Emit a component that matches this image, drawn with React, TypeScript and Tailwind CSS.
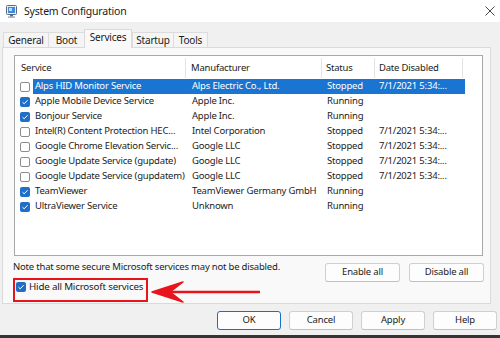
import React from "react";

type Row = { name: string; maker: string; status: string; date: string; checked: boolean; sel?: boolean };

const rows: Row[] = [
  { name: "Alps HID Monitor Service", maker: "Alps Electric Co., Ltd.", status: "Stopped", date: "7/1/2021 5:34:...", checked: false, sel: true },
  { name: "Apple Mobile Device Service", maker: "Apple Inc.", status: "Running", date: "", checked: true },
  { name: "Bonjour Service", maker: "Apple Inc.", status: "Running", date: "", checked: true },
  { name: "Intel(R) Content Protection HEC...", maker: "Intel Corporation", status: "Stopped", date: "7/1/2021 5:34:...", checked: false },
  { name: "Google Chrome Elevation Servic...", maker: "Google LLC", status: "Stopped", date: "7/1/2021 5:34:...", checked: false },
  { name: "Google Update Service (gupdate)", maker: "Google LLC", status: "Stopped", date: "7/1/2021 5:34:...", checked: false },
  { name: "Google Update Service (gupdatem)", maker: "Google LLC", status: "Stopped", date: "7/1/2021 5:34:...", checked: false },
  { name: "TeamViewer", maker: "TeamViewer Germany GmbH", status: "Running", date: "", checked: true },
  { name: "UltraViewer Service", maker: "Unknown", status: "Running", date: "", checked: true },
];

function Check({ on }: { on: boolean }) {
  if (on)
    return (
      <span className="w-[10px] h-[10px] rounded-[2px] bg-[#1f6fc9] flex items-center justify-center shrink-0">
        <svg width="8" height="8" viewBox="0 0 8 8">
          <path d="M1.5 4.2 L3.2 5.8 L6.6 2.2" fill="none" stroke="#fff" strokeWidth="1" />
        </svg>
      </span>
    );
  return <span className="w-[10px] h-[10px] rounded-[2px] border border-[#8c8c8c] bg-white shrink-0" />;
}

function Btn({ label, w, primary }: { label: string; w: string; primary?: boolean }) {
  return (
    <div
      className={`${w} h-[19px] rounded-[3px] border ${
        primary ? "border-[#1a6fc4]" : "border-[#d0d0d0] border-b-[#c0c0c0]"
      } bg-[#fdfdfd] flex items-center justify-center text-[9.5px] tracking-[-0.2px] text-[#1b1b1b]`}
    >
      {label}
    </div>
  );
}

function Tab({ label, w, sel }: { label: string; w: string; sel?: boolean }) {
  if (sel)
    return (
      <div className={`${w} h-[19px] -mb-px z-10 bg-[#f9f9f9] border-t border-l border-r border-[#dadada] flex items-center justify-center pb-[3px] text-[10px] tracking-[-0.2px] text-[#1b1b1b]`}>
        {label}
      </div>
    );
  return (
    <div className={`${w} h-[15px] bg-[#f5f5f5] border-t border-l border-[#dcdcdc] flex items-center justify-center text-[10px] tracking-[-0.2px] text-[#1b1b1b]`}>
      {label}
    </div>
  );
}

export default function App() {
  return (
    <div className="w-[500px] h-[338px] bg-[#f0f0f0] flex flex-col overflow-hidden font-['Noto_Sans',sans-serif] text-[#1b1b1b]">
      {/* Title bar */}
      <div className="h-[22px] bg-white flex items-center pl-[6px] shrink-0">
        <svg width="11" height="13" viewBox="0 0 11 13">
          <rect x="0.5" y="0.5" width="10" height="9" rx="1" fill="#e8eef5" stroke="#5a6b80" />
          <rect x="2" y="2" width="7" height="6" fill="#3d8be0" />
          <rect x="3" y="3" width="3" height="3" fill="#bfe0ff" />
          <rect x="4" y="10" width="3" height="1.5" fill="#5a6b80" />
          <rect x="2" y="11.5" width="7" height="1.2" fill="#8a97a8" />
        </svg>
        <span className="ml-[7px] text-[10.5px] tracking-[-0.2px] leading-none text-[#1a1a1a]">System Configuration</span>
        <svg className="ml-auto mr-[5px]" width="10" height="10" viewBox="0 0 10 10">
          <path d="M0.5 0.5 L9.5 9.5 M9.5 0.5 L0.5 9.5" stroke="#333" strokeWidth="0.9" />
        </svg>
      </div>

      {/* Tabs */}
      <div className="mt-[7px] pl-[3px] flex items-end h-[18px] shrink-0">
        <Tab label="General" w="w-[45px]" />
        <Tab label="Boot" w="w-[36px]" />
        <Tab label="Services" w="w-[48px]" sel />
        <Tab label="Startup" w="w-[41px]" />
        <div className="w-[35px] h-[15px] bg-[#f5f5f5] border-t border-l border-r border-[#dcdcdc] flex items-center justify-center text-[10px] tracking-[-0.2px]">
          Tools
        </div>
      </div>

      {/* Panel */}
      <div className="ml-[2px] w-[489px] h-[257px] border border-[#dadada] bg-[#f9f9f9] flex flex-col pt-[7px] shrink-0 text-[9.5px] tracking-[-0.2px]">
        <div className="ml-[11px] w-[469px] h-[201px] border border-[#a8a8a8] bg-white flex flex-col">
          {/* header */}
          <div className="h-[22px] flex items-stretch shrink-0 pt-[2px]">
            <div className="w-[171px] pl-[6px] flex items-center border-r border-[#e3e3e3]">Service</div>
            <div className="w-[136px] pl-[5px] flex items-center border-r border-[#e3e3e3]">Manufacturer</div>
            <div className="w-[53px] pl-[4px] flex items-center border-r border-[#e3e3e3]">Status</div>
            <div className="w-[88px] pl-[4px] flex items-center border-r border-[#e3e3e3]">Date Disabled</div>
          </div>
          <div className="h-[1px] shrink-0" />
          {rows.map((r) => (
            <div key={r.name} className="h-[15px] flex items-center shrink-0">
              <div className="w-[18px] pl-[5px] flex items-center">
                <Check on={r.checked} />
              </div>
              <div
                className={`h-[15px] flex items-center whitespace-nowrap ${
                  r.sel ? "bg-[#1a75d2] text-white" : ""
                }`}
              >
                <div className="w-[153px] pl-[2px] overflow-hidden">{r.name}</div>
                <div className="w-[136px] pl-[6px] overflow-hidden">{r.maker}</div>
                <div className="w-[53px] pl-[5px]">{r.status}</div>
                <div className="w-[90px] pl-[4px] overflow-hidden">{r.date}</div>
              </div>
            </div>
          ))}
        </div>

        {/* note + enable/disable */}
        <div className="mt-[7px] flex items-start h-[19px] shrink-0">
          <div className="ml-[10px] leading-[10px] -mt-[1px] whitespace-nowrap">
            Note that some secure Microsoft services may not be disabled.
          </div>
          <div className="ml-auto mr-[6px] flex gap-[9px]">
            <Btn label="Enable all" w="w-[75px]" />
            <Btn label="Disable all" w="w-[75px]" />
          </div>
        </div>

        {/* hide checkbox */}
        <div className="relative h-[10px] pl-[13px] flex items-center shrink-0">
          <Check on={true} />
          <span className="ml-[3px] whitespace-nowrap text-[9.8px]">Hide all Microsoft services</span>
          <div className="absolute left-[10px] -top-[4px] w-[135px] h-[24px] border-2 border-[#e8141c]" />
          <svg className="absolute left-[147px] -top-[2px]" width="110" height="24" viewBox="0 0 110 24">
            <line x1="19" y1="12" x2="110" y2="12" stroke="#e8141c" strokeWidth="2.5" />
            <path d="M2 12 L33 2 L20 12 L33 22 Z" fill="#e8141c" stroke="#e8141c" strokeWidth="1.5" strokeLinejoin="round" />
          </svg>
        </div>
      </div>

      {/* bottom buttons */}
      <div className="mt-[7px] flex justify-end gap-[8px] pr-[3px] shrink-0">
        <Btn label="OK" w="w-[64px]" primary />
        <Btn label="Cancel" w="w-[64px]" />
        <Btn label="Apply" w="w-[64px]" />
        <Btn label="Help" w="w-[64px]" />
      </div>

      <div className="mt-auto h-[3px] bg-[#353535] shrink-0" />
    </div>
  );
}
